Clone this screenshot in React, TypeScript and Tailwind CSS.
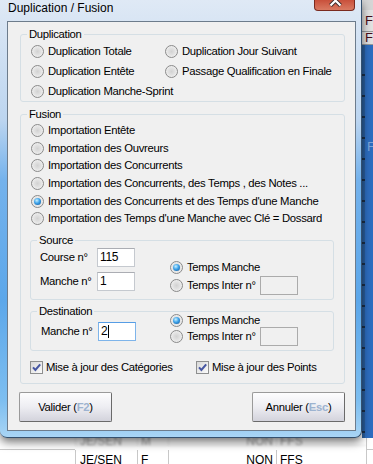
import React from "react";

const FONT = "font-['Liberation_Sans',Arial,sans-serif] text-[11.3px] tracking-[-0.3px]";

function Radio({ label, checked = false }: { label: string; checked?: boolean }) {
  return (
    <div className="flex items-center">
      <span className="flex h-[13px] w-[13px] shrink-0 items-center justify-center rounded-full border border-[#8a8a8a] bg-[radial-gradient(circle,#d2d2d2_0%,#e4e4e4_50%,#fbfbfb_100%)]">
        {checked && (
          <span className="h-[7px] w-[7px] rounded-full bg-[radial-gradient(circle_at_40%_35%,#c9f1ff_0%,#3ea3ea_45%,#0b4f92_100%)]" />
        )}
      </span>
      <span className="ml-[4px] whitespace-nowrap">{label}</span>
    </div>
  );
}

function Check({ label }: { label: string }) {
  return (
    <div className="flex items-center">
      <span className="flex h-[13px] w-[13px] shrink-0 items-center justify-center border border-[#8e8f8f] bg-[linear-gradient(135deg,#d8d8d8,#fbfbfb)]">
        <svg width="11" height="11" viewBox="0 0 11 11">
          <path d="M2 5.3 L4.4 8 L9.2 2.3" stroke="#4656a2" strokeWidth="2" fill="none" />
        </svg>
      </span>
      <span className="ml-[3px] whitespace-nowrap">{label}</span>
    </div>
  );
}

function Box({ value, focused = false, disabled = false }: { value?: string; focused?: boolean; disabled?: boolean }) {
  let cls = "border-[#c5c9cf] border-t-[#abadb3] bg-white";
  if (focused) cls = "border-[#7eb4ea] border-t-[#569de5] bg-white";
  if (disabled) cls = "border-[#ababab] bg-[#f0f0f0]";
  return (
    <div className={`flex h-[19px] w-[38px] shrink-0 items-center border pl-[2px] text-[12px] ${cls}`}>
      {value}
      {focused && <span className="ml-[1px] h-[13px] w-[1px] bg-black" />}
    </div>
  );
}

const fusion = [
  "Importation Entête",
  "Importation des Ouvreurs",
  "Importation des Concurrents",
  "Importation des Concurrents,  des Temps , des Notes ...",
  "Importation des Concurrents et des Temps d'une Manche",
  "Importation des Temps d'une Manche avec Clé = Dossard",
];

export default function App() {
  return (
    <div className="flex h-[464px] w-[373px] flex-col overflow-hidden bg-white">
      <div className="flex h-[438px]">
        {/* window */}
        <div className="relative z-10 flex h-[438px] w-[362px] shrink-0 flex-col rounded-b-[7px] border-r border-b border-[#34506e] bg-[linear-gradient(to_bottom,#dfe9f5_0px,#d3e2f3_40px,#bcd5f0_120px,#74b2ec_180px,#5ca7ea_300px,#7dbef0_400px,#a9d5f5_438px)] shadow-[0_4px_10px_rgba(0,0,0,0.55)]">
          <div className="flex h-[21px] items-start justify-between">
            <span className="pl-[8px] pt-[1px] font-['Liberation_Sans',Arial,sans-serif] text-[12px] leading-[15px] text-black">
              Duplication / Fusion
            </span>
            <div className="mr-[6px] h-[11px] w-[41px] overflow-hidden rounded-b-[4px] border border-t-0 border-[#7a2a1f] bg-[linear-gradient(to_bottom,#c9503b,#d97a62)]">
              <svg width="41" height="11" viewBox="0 0 41 11">
                <path d="M15.5 -4.5 L25.5 5.5 M25.5 -4.5 L15.5 5.5" stroke="#3a2a2a" strokeWidth="4" />
                <path d="M15.5 -4.5 L25.5 5.5 M25.5 -4.5 L15.5 5.5" stroke="#ffffff" strokeWidth="2.2" />
              </svg>
            </div>
          </div>

          <div className={`ml-[7px] flex h-[410px] w-[349px] flex-col border border-[#6d7c8c] bg-[#f0f0f0] pl-[12px] pt-[6px] leading-[15px] text-black ${FONT}`}>
            {/* Duplication */}
            <fieldset className="w-[325px] rounded-[3px] border border-[#d5dfe5]">
              <legend className="ml-[6px] px-[2px] leading-[13px]">Duplication</legend>
              <div className="grid grid-cols-[134px_1fr] auto-rows-[20px] items-center pl-[10px]">
                <Radio label="Duplication Totale" />
                <Radio label="Duplication Jour Suivant" />
                <Radio label="Duplication Entête" />
                <Radio label="Passage Qualification en Finale" />
                <Radio label="Duplication Manche-Sprint" />
              </div>
            </fieldset>

            {/* Fusion */}
            <fieldset className="mt-[6px] w-[325px] rounded-[3px] border border-[#d5dfe5] pb-[9px]">
              <legend className="ml-[6px] px-[2px] leading-[13px]">Fusion</legend>
              <div className="mt-[1px] pl-[10px]">
                {fusion.map((l, i) => (
                  <div key={l} className="flex h-[17.6px] items-center">
                    <Radio label={l} checked={i === 4} />
                  </div>
                ))}
              </div>

              <fieldset className="ml-[9px] mt-[6px] w-[304px] rounded-[3px] border border-[#d5dfe5]">
                <legend className="ml-[6px] px-[2px] leading-[13px]">Source</legend>
                <div className="flex items-start pb-[4px] pl-[9px]">
                  <div className="mt-[1px] flex flex-col gap-[5px]">
                    <div className="flex h-[19px] items-center">
                      <span className="w-[57px] whitespace-nowrap">Course n°</span>
                      <Box value="115" />
                    </div>
                    <div className="flex h-[19px] items-center">
                      <span className="w-[57px] whitespace-nowrap">Manche n°</span>
                      <Box value="1" />
                    </div>
                  </div>
                  <div className="ml-[35px] mt-[12px] flex flex-col">
                    <div className="flex h-[17px] items-center">
                      <Radio label="Temps Manche" checked />
                    </div>
                    <div className="flex h-[19px] items-center">
                      <div className="w-[90px]">
                        <Radio label="Temps Inter n°" />
                      </div>
                      <Box disabled />
                    </div>
                  </div>
                </div>
              </fieldset>

              <fieldset className="ml-[9px] mt-[5px] w-[304px] rounded-[3px] border border-[#d5dfe5]">
                <legend className="ml-[6px] px-[2px] leading-[13px]">Destination</legend>
                <div className="flex items-start pb-[4px] pl-[10px]">
                  <div className="mt-[4.5px] flex h-[19px] items-center">
                    <span className="w-[57px] whitespace-nowrap">Manche n°</span>
                    <Box value="2" focused />
                  </div>
                  <div className="ml-[34px] mt-[-5px] flex flex-col">
                    <div className="flex h-[16px] items-center">
                      <Radio label="Temps Manche" checked />
                    </div>
                    <div className="mt-[-2px] flex h-[19px] items-center">
                      <div className="w-[90px]">
                        <Radio label="Temps Inter n°" />
                      </div>
                      <Box disabled />
                    </div>
                  </div>
                </div>
              </fieldset>

              <div className="ml-[9px] mt-[10px] flex h-[13px] items-center">
                <div className="w-[166px]">
                  <Check label="Mise à jour des Catégories" />
                </div>
                <Check label="Mise à jour des Points" />
              </div>
            </fieldset>

            {/* buttons */}
            <div className="mt-[8.5px] flex w-[325px] justify-between">
              <button className="ml-[-1px] flex h-[30px] w-[93px] items-center justify-center rounded-[2px] border border-[#9a9a9a] border-r-[#6a6a6a] border-b-[#6a6a6a] bg-[linear-gradient(to_bottom,#fdfdfe,#ededf2_50%,#d3d3dc)]">
                Valider (<span className="font-bold text-[#9db3d0]">F2</span>)
              </button>
              <button className="flex h-[30px] w-[93px] items-center justify-center rounded-[2px] border border-[#9a9a9a] border-r-[#6a6a6a] border-b-[#6a6a6a] bg-[linear-gradient(to_bottom,#fdfdfe,#ededf2_50%,#d3d3dc)]">
                Annuler (<span className="font-bold text-[#9db3d0]">Esc</span>)
              </button>
            </div>
          </div>
        </div>

        {/* background app on the right */}
        <div className="flex flex-1 flex-col font-['Liberation_Sans',Arial,sans-serif] text-[13px] text-[#4a0d1a]">
          <div className="h-[10px] bg-[#d6d6d6]" />
          <div className="flex h-[22px] items-center border-b border-[#9a9a9a] bg-[#e2e2e2] pl-[3px]">F</div>
          <div className="flex h-[13px] items-center border-b border-[#9a9a9a] bg-[#e2e2e2] pl-[3px]">F</div>
          <div className="flex flex-1">
            <div className="w-[3px] bg-[#2a5f9e] bg-[repeating-linear-gradient(to_bottom,transparent_0px,transparent_19px,#1b2f48_19px,#1b2f48_21px)] bg-[position:0_10px]" />
            <div className="flex-1 bg-[#2d6dc0] pt-[92px] pl-[2px] text-[#7fa6d8]">F</div>
          </div>
        </div>
      </div>

      {/* table behind the dialog */}
      <div className="grid grid-cols-[75px_62px_31px_108px_90px_1fr] font-['Liberation_Sans',Arial,sans-serif] text-[12px] leading-[14px] text-black">
        <div className="h-[12px] border-b border-[#c8c8c8]" />
        <div className="h-[12px] border-b border-l border-[#c8c8c8] pl-[4px] blur-[1px] opacity-40 -mt-[4px]">JE/SEN</div>
        <div className="h-[12px] border-b border-l border-[#c8c8c8] pl-[3px] blur-[1px] opacity-40 -mt-[4px]">M</div>
        <div className="h-[12px] border-b border-l border-[#c8c8c8] pr-[3px] text-right blur-[1px] opacity-40 -mt-[4px]">NON</div>
        <div className="h-[12px] border-b border-l border-[#c8c8c8] pl-[3px] blur-[1px] opacity-40 -mt-[4px]">FFS</div>
        <div className="h-[12px] border-b border-l border-[#c8c8c8]" />

        <div className="h-[14px]" />
        <div className="h-[14px] border-l border-[#c8c8c8] pl-[4px] pt-[3px]">JE/SEN</div>
        <div className="h-[14px] border-l border-[#c8c8c8] pl-[3px] pt-[3px]">F</div>
        <div className="h-[14px] border-l border-[#c8c8c8] pr-[3px] pt-[3px] text-right">NON</div>
        <div className="h-[14px] border-l border-[#c8c8c8] pl-[3px] pt-[3px]">FFS</div>
        <div className="h-[14px] border-l border-[#c8c8c8]" />
      </div>
    </div>
  );
}
